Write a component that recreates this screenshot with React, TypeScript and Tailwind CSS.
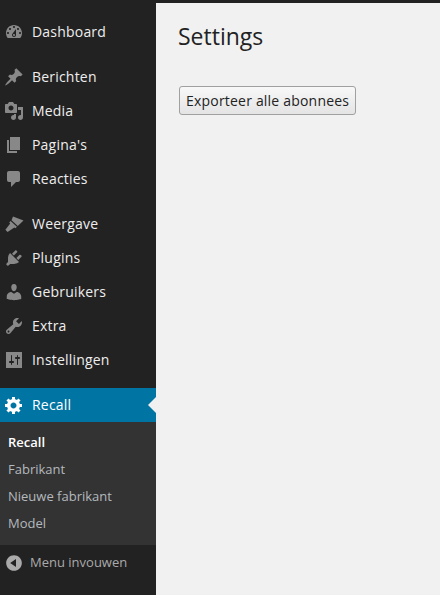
import React from "react";

const icons = {
  dashboard:
    "M3.76 16h12.48c1.1-1.37 1.76-3.11 1.76-5 0-4.42-3.58-8-8-8s-8 3.58-8 8c0 1.89.66 3.63 1.76 5zM10 4c.55 0 1 .45 1 1s-.45 1-1 1-1-.45-1-1 .45-1 1-1zM6 6c.55 0 1 .45 1 1s-.45 1-1 1-1-.45-1-1 .45-1 1-1zm8 0c.55 0 1 .45 1 1s-.45 1-1 1-1-.45-1-1 .45-1 1-1zm-5.37 5.55L12 7v6c0 1.1-.9 2-2 2s-2-.9-2-2c0-.57.24-1.08.63-1.45zM4 10c.55 0 1 .45 1 1s-.45 1-1 1-1-.45-1-1 .45-1 1-1zm12 0c.55 0 1 .45 1 1s-.45 1-1 1-1-.45-1-1 .45-1 1-1zm-5 3c0-.55-.45-1-1-1s-1 .45-1 1 .45 1 1 1 1-.45 1-1z",
  post: "M10.44 3.02l1.82-1.82 6.36 6.35-1.83 1.82c-1.05-.68-2.48-.57-3.41.36l-.75.75c-.92.93-1.04 2.35-.35 3.41l-1.83 1.82-2.41-2.41-2.8 2.79c-.42.42-3.38 2.71-3.8 2.29s1.86-3.39 2.28-3.81l2.79-2.79L4.1 9.36l1.83-1.82c1.05.69 2.48.57 3.4-.36l.75-.75c.93-.92 1.05-2.35.36-3.41z",
  media:
    "M13 11V4c0-.55-.45-1-1-1h-1.67L9 1H5L3.67 3H2c-.55 0-1 .45-1 1v7c0 .55.45 1 1 1h10c.55 0 1-.45 1-1zM7 4.5c1.38 0 2.5 1.12 2.5 2.5S8.38 9.5 7 9.5 4.5 8.38 4.5 7 5.62 4.5 7 4.5zM14 6h5v10.5c0 1.38-1.12 2.5-2.5 2.5S14 17.88 14 16.5s1.12-2.5 2.5-2.5c.17 0 .34.02.5.05V9h-3V6zm-4 8.05V13h2v3.5c0 1.38-1.12 2.5-2.5 2.5S7 17.88 7 16.5 8.12 14 9.5 14c.17 0 .34.02.5.05z",
  page: "M6 15V2h10v13H6zm-1 1h8v2H3V5h2v11z",
  comments: "M5 2h9c1.1 0 2 .9 2 2v7c0 1.1-.9 2-2 2h-2l-5 5v-5H5c-1.1 0-2-.9-2-2V4c0-1.1.9-2 2-2z",
  appearance:
    "M9 2.5L19.5 6.5 13.8 12 7.5 6.2zM6.6 7L12.9 12.8 11.5 14.2 10.4 13.4 3.6 18 1.4 15.8 6.2 9.4 5.2 8.4z",
  plugins:
    "M13.11 4.36L9.87 7.6 8 5.73l3.24-3.24c.35-.34 1.05-.2 1.56.32.52.51.66 1.21.31 1.55zm-8 1.77l.91-1.12 9.01 9.01-1.19.84c-.71.71-2.63 1.16-3.82 1.16H6.14L4.9 17.26c-.59.59-1.54.59-2.12 0-.59-.58-.59-1.53 0-2.12l1.24-1.24v-3.88c0-1.13.4-3.19 1.09-3.89zm7.26 3.97l3.24-3.24c.34-.35 1.04-.21 1.55.31.52.51.66 1.21.31 1.55l-3.24 3.25z",
  users:
    "M10 9.25c-2.27 0-2.73-3.44-2.73-3.44C7 4.02 7.82 2 9.97 2c2.16 0 2.98 2.02 2.71 3.81 0 0-.41 3.44-2.68 3.44zm0 2.57L12.72 10c2.39 0 4.52 2.33 4.52 4.53v2.49s-3.65 1.13-7.24 1.13c-3.65 0-7.24-1.13-7.24-1.13v-2.49c0-2.25 1.94-4.48 4.47-4.48z",
  tools:
    "M16.68 9.77c-1.34 1.34-3.3 1.67-4.95.99l-5.41 6.52c-.99.99-2.59.99-3.58 0s-.99-2.59 0-3.57l6.52-5.42c-.68-1.65-.35-3.61.99-4.95 1.28-1.28 3.12-1.62 4.72-1.06l-2.89 2.89 2.82 2.82 2.86-2.87c.53 1.58.18 3.39-1.08 4.65zM3.81 16.21c.4.39 1.04.39 1.43 0 .4-.4.4-1.04 0-1.43-.39-.4-1.03-.4-1.43 0-.39.39-.39 1.03 0 1.43z",
  settings:
    "M18 18V2H2v16h16zM8 11h1c.55 0 1 .45 1 1s-.45 1-1 1H8v1.5c0 .28-.22.5-.5.5s-.5-.22-.5-.5V13H6c-.55 0-1-.45-1-1s.45-1 1-1h1V5.5c0-.28.22-.5.5-.5s.5.22.5.5V11zm5-2h-1c-.55 0-1-.45-1-1s.45-1 1-1h1V5.5c0-.28.22-.5.5-.5s.5.22.5.5V7h1c.55 0 1 .45 1 1s-.45 1-1 1h-1v5.5c0 .28-.22.5-.5.5s-.5-.22-.5-.5V9z",
  generic:
    "M18 12h-2.18c-.17.7-.44 1.35-.81 1.93l1.54 1.54-2.1 2.1-1.54-1.54c-.58.36-1.23.63-1.91.79V19H8v-2.18c-.68-.16-1.33-.43-1.91-.79l-1.54 1.54-2.12-2.12 1.54-1.54c-.36-.58-.63-1.23-.79-1.91H1V9.03h2.17c.16-.7.44-1.35.8-1.94L2.43 5.55l2.1-2.1 1.54 1.54c.58-.37 1.24-.64 1.93-.81V2h3v2.18c.68.16 1.33.43 1.91.79l1.54-1.54 2.12 2.12-1.54 1.54c.36.59.64 1.24.8 1.94H18V12zm-8.5 1.5c1.66 0 3-1.34 3-3s-1.34-3-3-3-3 1.34-3 3 1.34 3 3 3z",
  collapse:
    "M10 2.16c4.33 0 7.84 3.51 7.84 7.84s-3.51 7.84-7.84 7.84S2.16 14.33 2.16 10 5.71 2.16 10 2.16zm2 11.72V6.12L6.18 9.97z",
};

function Icon({ d, className }: { d: string; className: string }) {
  return (
    <svg viewBox="0 0 20 20" className={className} fill="currentColor">
      <path d={d} fillRule="evenodd" />
    </svg>
  );
}

function MenuItem({ icon, label }: { icon: string; label: string }) {
  return (
    <div className="flex h-[34px] items-center text-sm tracking-[0.2px] text-[#eeeeee]">
      <Icon d={icon} className="ml-1 mr-2 h-5 w-5 text-[#888888]" />
      <span>{label}</span>
    </div>
  );
}

export default function App() {
  return (
    <div className="flex h-screen flex-col overflow-hidden bg-[#f1f1f1] font-['Open_Sans',sans-serif]">
      <div className="h-[3px] shrink-0 bg-[#222222]" />
      <div className="flex min-h-0 flex-1">
        {/* Sidebar */}
        <aside className="w-[156px] shrink-0 bg-[#222222] pt-3">
          <MenuItem icon={icons.dashboard} label="Dashboard" />

          <div className="mt-[11px]">
            <MenuItem icon={icons.post} label="Berichten" />
            <MenuItem icon={icons.media} label="Media" />
            <MenuItem icon={icons.page} label="Pagina's" />
            <MenuItem icon={icons.comments} label="Reacties" />
          </div>

          <div className="mt-[11px]">
            <MenuItem icon={icons.appearance} label="Weergave" />
            <MenuItem icon={icons.plugins} label="Plugins" />
            <MenuItem icon={icons.users} label="Gebruikers" />
            <MenuItem icon={icons.tools} label="Extra" />
            <MenuItem icon={icons.settings} label="Instellingen" />
          </div>

          {/* Active item */}
          <div className="relative mt-[11px] flex h-[34px] items-center bg-[#0074a2] text-sm tracking-[0.2px] text-white">
            <Icon d={icons.generic} className="ml-1 mr-2 h-5 w-5 text-white" />
            <span>Recall</span>
            <div className="absolute right-0 top-[9px] h-0 w-0 border-y-8 border-r-8 border-y-transparent border-r-[#f1f1f1]" />
          </div>

          <div className="bg-[#333333] pb-2 pt-[7px] text-[13px]">
            <div className="flex h-[27px] items-center pl-2 font-semibold text-white">Recall</div>
            <div className="flex h-[27px] items-center pl-2 text-[#b4b9be]">Fabrikant</div>
            <div className="flex h-[27px] items-center pl-2 text-[#b4b9be]">Nieuwe fabrikant</div>
            <div className="flex h-[27px] items-center pl-2 text-[#b4b9be]">Model</div>
          </div>

          <div className="flex h-[36px] items-center text-[13px] text-[#aaaaaa]">
            <Icon d={icons.collapse} className="ml-[4px] mr-[6px] h-5 w-5 text-[#aaaaaa]" />
            <span>Menu invouwen</span>
          </div>
        </aside>

        {/* Content */}
        <main className="min-w-0 flex-1 pl-[22px] pt-[17px]">
          <h1 className="text-[23px] leading-[32px] text-[#222222]">Settings</h1>
          <button className="ml-px mt-[34px] block h-[29px] whitespace-nowrap rounded-[3px] border border-[#a0a0a0] bg-gradient-to-b from-[#f8f8f8] to-[#e4e4e4] px-[6px] text-sm tracking-[0.2px] text-[#222222]">
            Exporteer alle abonnees
          </button>
        </main>
      </div>
    </div>
  );
}
